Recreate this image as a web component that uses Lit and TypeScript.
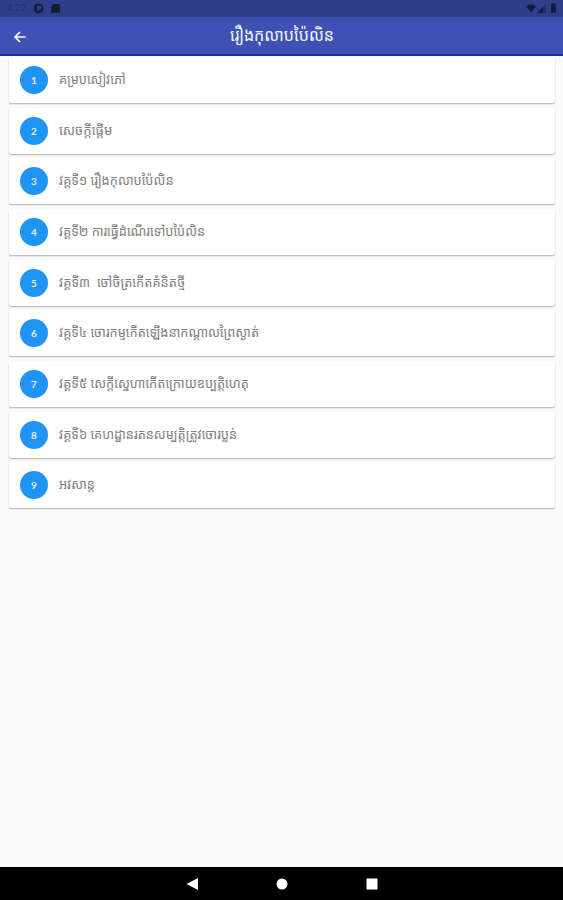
import { LitElement, html, css } from "lit";
import { customElement } from "lit/decorators.js";

interface Chapter {
  title: string;
  width: number;
}

const chapters: Chapter[] = [
  { title: "គម្របសៀវភៅ", width: 67 },
  { title: "សេចក្តីផ្តើម", width: 53 },
  { title: "វគ្គទី១ រឿងកុលាបប៉ៃលិន", width: 115 },
  { title: "វគ្គទី២ ការធ្វើដំណើរទៅបប៉ៃលិន", width: 146 },
  { title: "វគ្គទី៣ \u00a0ចៅចិត្រកើតគំនិតថ្មី", width: 126 },
  { title: "វគ្គទី៤ ចោរកម្មកើតឡើងនាកណ្តាលព្រៃស្ងាត់", width: 200 },
  { title: "វគ្គទី៥ សេក្តីស្នេហាកើតក្រោយឧប្បត្តិហេតុ", width: 190 },
  { title: "វគ្គទី៦ គេហដ្ឋានរតនសម្បត្តិត្រូវចោរប្លន់", width: 178 },
  { title: "អវសាន្ត", width: 36 },
];

@customElement("app-root")
export class AppRoot extends LitElement {
  static styles = css`
    :host {
      display: flex;
      flex-direction: column;
      height: 900px;
      overflow: hidden;
      background: #fafafa;
      font-family: "Noto Sans Khmer", "Noto Sans", "DejaVu Sans", sans-serif;
    }
    svg { display: block; }
    .status {
      height: 17px;
      flex: none;
      box-sizing: border-box;
      display: flex;
      align-items: center;
      padding: 0 4px 0 7px;
      background: #303f8a;
      color: #222e6c;
      font: 9px/17px Roboto, sans-serif;
    }
    .time { width: 26px; letter-spacing: 0.3px; }
    .spacer { flex: 1; }
    .bar {
      height: 39px;
      flex: none;
      box-sizing: border-box;
      display: grid;
      grid-template-columns: 41px 1fr 40px;
      align-items: center;
      background: #4051b5;
      border-bottom: 2px solid #1a2ba2;
      color: #f4f6ff;
    }
    .back { padding: 2px 0 0 13px; }
    .heading {
      justify-self: center;
      font-size: 17px;
      line-height: 35px;
      padding-bottom: 2px;
      white-space: nowrap;
    }
    .list {
      flex: 1;
      display: flex;
      flex-direction: column;
      gap: 4.67px;
      padding: 1px 8.5px 0;
    }
    .card {
      height: 46px;
      flex: none;
      box-sizing: border-box;
      display: flex;
      align-items: center;
      gap: 11px;
      padding: 0 11.5px;
      background: #fff;
      border-radius: 2px;
      box-shadow: 0 1px 1.5px rgba(0, 0, 0, 0.28), 0 0 1px rgba(0, 0, 0, 0.06);
    }
    .badge {
      width: 28px;
      height: 28px;
      border-radius: 50%;
      background: #2094f3;
      color: #e0f1ff;
      font: 700 10px/28px Lato, sans-serif;
      text-align: center;
    }
    .name {
      font-size: 13.5px;
      line-height: 24px;
      padding-bottom: 2px;
      color: #808080;
      white-space: nowrap;
      transform-origin: left center;
    }
    .nav {
      height: 33px;
      flex: none;
      display: flex;
      justify-content: center;
      align-items: center;
      gap: 78px;
      background: #000;
    }
  `;

  firstUpdated() {
    this.fitTitles();
    document.fonts.ready.then(() => this.fitTitles());
  }

  private fitTitles() {
    this.renderRoot.querySelectorAll<HTMLElement>("[data-width]").forEach((el) => {
      el.style.transform = `scaleX(${Number(el.dataset.width) / el.offsetWidth})`;
    });
  }

  render() {
    return html`
      <div class="status">
        <span class="time">4:29</span>
        <svg width="30" height="13" viewBox="0 0 30 13" fill="#141c40">
          <path fill-rule="evenodd" d="M5.5 1.5a5 5 0 1 1 0 10a5 5 0 0 1 0-10M4 4v5h1.3V7.6h1.6a1.8 1.8 0 0 0 0-3.6z" />
          <path d="M20.5 2h6.5v9h-9V4.6z" />
        </svg>
        <span class="spacer"></span>
        <svg width="34" height="13" viewBox="0 0 34 13" fill="#141c40">
          <path d="M1 4.2Q6 .2 11 4.2L6 10.5z" />
          <path d="M21 2v9h-9z" opacity=".45" />
          <path d="M18 5v6h-6z" />
          <path d="M26 2h1.5V1h2v1H31v9h-5z" />
        </svg>
      </div>
      <header class="bar">
        <svg class="back" width="14" height="14" viewBox="0 0 14 14" fill="none" stroke="#fff" stroke-width="1.7">
          <path d="M12.6 7H2.5M7 2L2 7l5 5" />
        </svg>
        <span class="heading" data-width="104">រឿងកុលាបប៉ៃលិន</span>
      </header>
      <main class="list">
        ${chapters.map(
          (c, i) => html`
            <div class="card">
              <span class="badge">${i + 1}</span>
              <span class="name" data-width=${c.width}>${c.title}</span>
            </div>
          `,
        )}
      </main>
      <nav class="nav">
        <svg width="12" height="12" viewBox="0 0 12 12" fill="#fff"><path d="M.5 6L12 0v12z" /></svg>
        <svg width="12" height="12" viewBox="0 0 12 12" fill="#fff"><circle cx="6" cy="6" r="5.5" /></svg>
        <svg width="12" height="12" viewBox="0 0 12 12" fill="#fff"><path d="M.5.5h11v11H.5z" /></svg>
      </nav>
    `;
  }
}
